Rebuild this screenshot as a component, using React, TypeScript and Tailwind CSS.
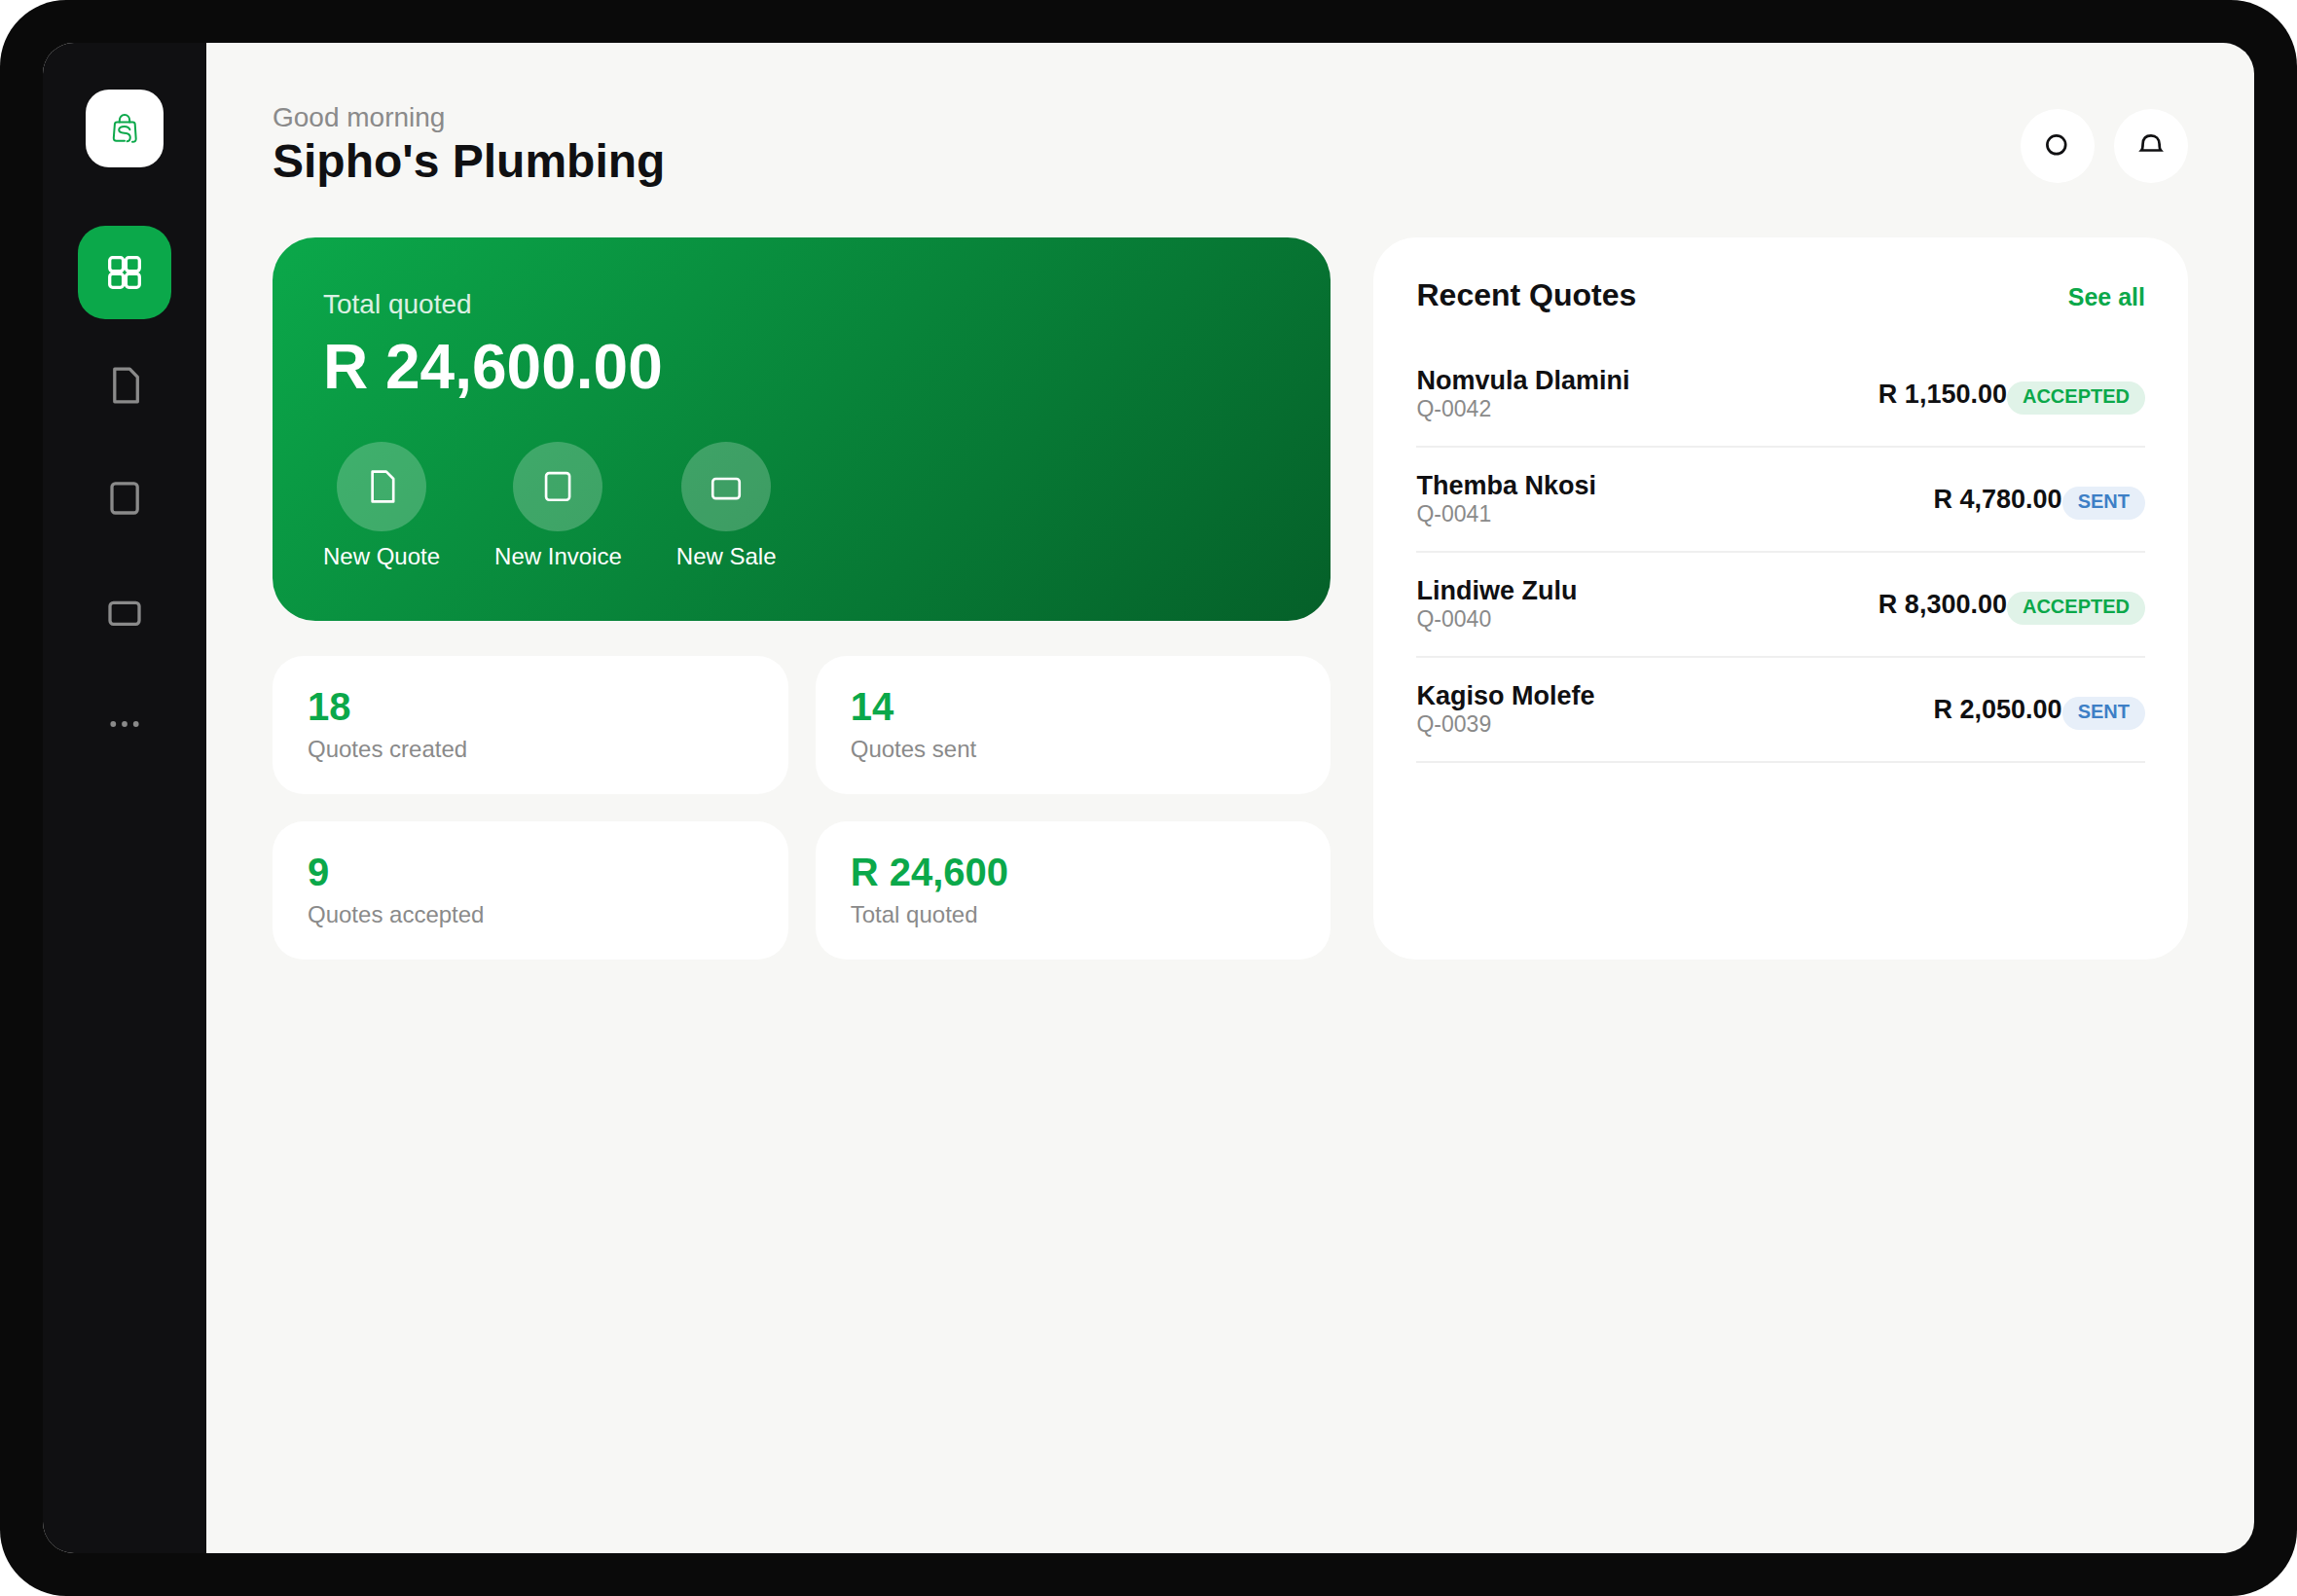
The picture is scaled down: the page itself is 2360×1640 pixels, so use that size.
import React from "react";

type IconName = "grid" | "document" | "square" | "card" | "more";

function Icon({ name, className }: { name: IconName; className: string }) {
  return (
    <svg viewBox="0 0 48 48" fill="none" stroke="currentColor" className={className} aria-hidden="true">
      {name === "grid" && (
        <>
          <rect x="8.7" y="8.7" width="13.9" height="13.9" rx="3" />
          <rect x="25.4" y="8.7" width="13.9" height="13.9" rx="3" />
          <rect x="8.7" y="25.4" width="13.9" height="13.9" rx="3" />
          <rect x="25.4" y="25.4" width="13.9" height="13.9" rx="3" />
        </>
      )}
      {name === "document" && <path d="M13.8 7.2H29.3L37.3 15.3V40.8H13.8Z" strokeLinejoin="round" />}
      {name === "square" && <rect x="11" y="8.8" width="26.2" height="30.2" rx="3.5" />}
      {name === "card" && <rect x="9" y="15.3" width="30" height="22" rx="3.5" />}
      {name === "more" && (
        <g fill="currentColor" stroke="none">
          <circle cx="12.3" cy="24" r="2.9" />
          <circle cx="24" cy="24" r="2.9" />
          <circle cx="35.7" cy="24" r="2.9" />
        </g>
      )}
    </svg>
  );
}

function Logo() {
  return (
    <svg viewBox="0 0 40 40" fill="none" stroke="currentColor" strokeWidth="2" strokeLinecap="round" className="size-10" aria-hidden="true">
      <path d="M14.8 13.4V11.8C14.8 8.4 17 6.1 20 6.1S25.2 8.4 25.2 11.8V13.4" />
      <path d="M20 32.8H11.5C9.6 32.8 8.7 31.7 8.8 29.9L9.9 15.6C10 14.1 10.7 13.4 12.2 13.4H28.4C29.9 13.4 30.6 14.1 30.7 15.6L31.7 30.6C31.8 32.6 30.8 33.8 28 33.7" />
      <path d="M25.4 21.2C24.6 18.9 22.6 18 19.8 18C16.4 18 14.2 19.3 14.2 21.5C14.2 24 16.8 24.5 19.8 24.8C23.3 25.1 25.8 26.4 25.8 29C25.8 31.5 24.6 33 22.6 33.2" />
    </svg>
  );
}

const navItems: { label: string; icon: IconName }[] = [
  { label: "Dashboard", icon: "grid" },
  { label: "Quotes", icon: "document" },
  { label: "Invoices", icon: "square" },
  { label: "Sales", icon: "card" },
  { label: "More", icon: "more" },
];

const actions: { label: string; icon: IconName }[] = [
  { label: "New Quote", icon: "document" },
  { label: "New Invoice", icon: "square" },
  { label: "New Sale", icon: "card" },
];

const stats = [
  { value: "18", label: "Quotes created" },
  { value: "14", label: "Quotes sent" },
  { value: "9", label: "Quotes accepted" },
  { value: "R 24,600", label: "Total quoted" },
];

const quotes = [
  { name: "Nomvula Dlamini", id: "Q-0042", amount: "R 1,150.00", status: "ACCEPTED" },
  { name: "Themba Nkosi", id: "Q-0041", amount: "R 4,780.00", status: "SENT" },
  { name: "Lindiwe Zulu", id: "Q-0040", amount: "R 8,300.00", status: "ACCEPTED" },
  { name: "Kagiso Molefe", id: "Q-0039", amount: "R 2,050.00", status: "SENT" },
];

function Sidebar() {
  return (
    <aside className="flex w-42 shrink-0 flex-col items-center bg-[#101012] pt-12">
      <div className="flex size-20 items-center justify-center rounded-3xl bg-white text-[#0ba84a]">
        <Logo />
      </div>
      <nav className="mt-15 flex flex-col gap-5">
        {navItems.map((item, i) => (
          <button
            key={item.label}
            aria-label={item.label}
            className={
              i === 0
                ? "flex size-24 items-center justify-center rounded-[28px] bg-[#0ba84a] text-white"
                : "flex size-24 items-center justify-center rounded-[28px] text-[#8a8a8a]"
            }
          >
            <Icon name={item.icon} className="size-12 stroke-[3.3]" />
          </button>
        ))}
      </nav>
    </aside>
  );
}

function Header() {
  return (
    <header className="flex items-center justify-between">
      <div className="pb-0.5">
        <p className="text-[28px] leading-[34px] text-[#8a8a8a]">Good morning</p>
        <h1 className="text-5xl leading-14 font-bold">Sipho's Plumbing</h1>
      </div>
      <div className="flex gap-5">
        <button aria-label="Search" className="flex size-19 items-center justify-center rounded-full bg-white">
          <svg viewBox="0 0 36 36" fill="none" stroke="currentColor" strokeWidth="2.7" className="size-9" aria-hidden="true">
            <circle cx="16.8" cy="16.8" r="9.4" />
          </svg>
        </button>
        <button aria-label="Notifications" className="flex size-19 items-center justify-center rounded-full bg-white">
          <svg viewBox="0 0 36 36" fill="none" stroke="currentColor" strokeWidth="2.7" className="size-9" aria-hidden="true">
            <path d="M8.2 22.5C9.5 21 9.6 18.5 9.6 16C9.8 10.4 13 7.4 18 7.4S26.4 10.4 26.6 16C26.6 18.5 26.7 21 28 22.5Z" />
          </svg>
        </button>
      </div>
    </header>
  );
}

function Hero() {
  return (
    <section className="rounded-[44px] bg-[linear-gradient(135deg,#0ba84a,#056029)] p-13 text-white">
      <p className="text-[28px] leading-[34px] text-white/85">Total quoted</p>
      <p className="mt-2.5 text-[64px] leading-[74px] font-bold">R 24,600.00</p>
      <div className="mt-10 flex gap-14">
        {actions.map((action) => (
          <button key={action.label} className="flex flex-col items-center gap-3 text-2xl leading-7">
            <span className="flex size-23 items-center justify-center rounded-full bg-white/22">
              <Icon name={action.icon} className="size-11 stroke-[2.9]" />
            </span>
            {action.label}
          </button>
        ))}
      </div>
    </section>
  );
}

function RecentQuotes() {
  return (
    <section className="rounded-[44px] bg-white px-11 py-10">
      <div className="mb-[30px] flex items-baseline justify-between">
        <h2 className="text-[32px] leading-[38px] font-bold">Recent Quotes</h2>
        <a href="#quotes" className="text-[25px] leading-7 font-bold text-[#0ba84a]">
          See all
        </a>
      </div>
      <ul>
        {quotes.map((quote) => (
          <li key={quote.id} className="flex items-center justify-between border-b-2 border-[#efefef] py-6">
            <div>
              <p className="text-[27px] leading-[30px] font-bold">{quote.name}</p>
              <p className="text-[23px] leading-7 text-[#8a8a8a]">{quote.id}</p>
            </div>
            <div className="flex items-baseline font-bold">
              <span className="text-[27px] leading-10">{quote.amount}</span>
              <span
                className={
                  quote.status === "SENT"
                    ? "rounded-full bg-[#e7eff9] px-4 pt-1 pb-2 text-xl leading-[22px] text-[#3d7fc6]"
                    : "rounded-full bg-[#e0f3e8] px-4 pt-1 pb-2 text-xl leading-[22px] text-[#0ba84a]"
                }
              >
                {quote.status}
              </span>
            </div>
          </li>
        ))}
      </ul>
    </section>
  );
}

export default function App() {
  return (
    <div className="flex min-h-screen rounded-[68px] bg-[#0a0a0a] p-11 font-['Liberation_Sans',Arial,sans-serif] text-[#101012]">
      <div className="flex flex-1 overflow-hidden rounded-[32px] bg-[#f7f7f5]">
        <Sidebar />
        <main className="flex-1 px-17 pt-15 pb-15">
          <Header />
          <div className="mt-12 grid grid-cols-[1.3fr_1fr] gap-11">
            <div className="flex flex-col gap-9">
              <Hero />
              <div className="grid grid-cols-2 gap-7">
                {stats.map((stat) => (
                  <div key={stat.label} className="rounded-4xl bg-white px-9 py-8">
                    <p className="text-[40px] leading-10 font-bold text-[#0ba84a]">{stat.value}</p>
                    <p className="mt-2.5 text-2xl leading-7 text-[#8a8a8a]">{stat.label}</p>
                  </div>
                ))}
              </div>
            </div>
            <RecentQuotes />
          </div>
        </main>
      </div>
    </div>
  );
}
